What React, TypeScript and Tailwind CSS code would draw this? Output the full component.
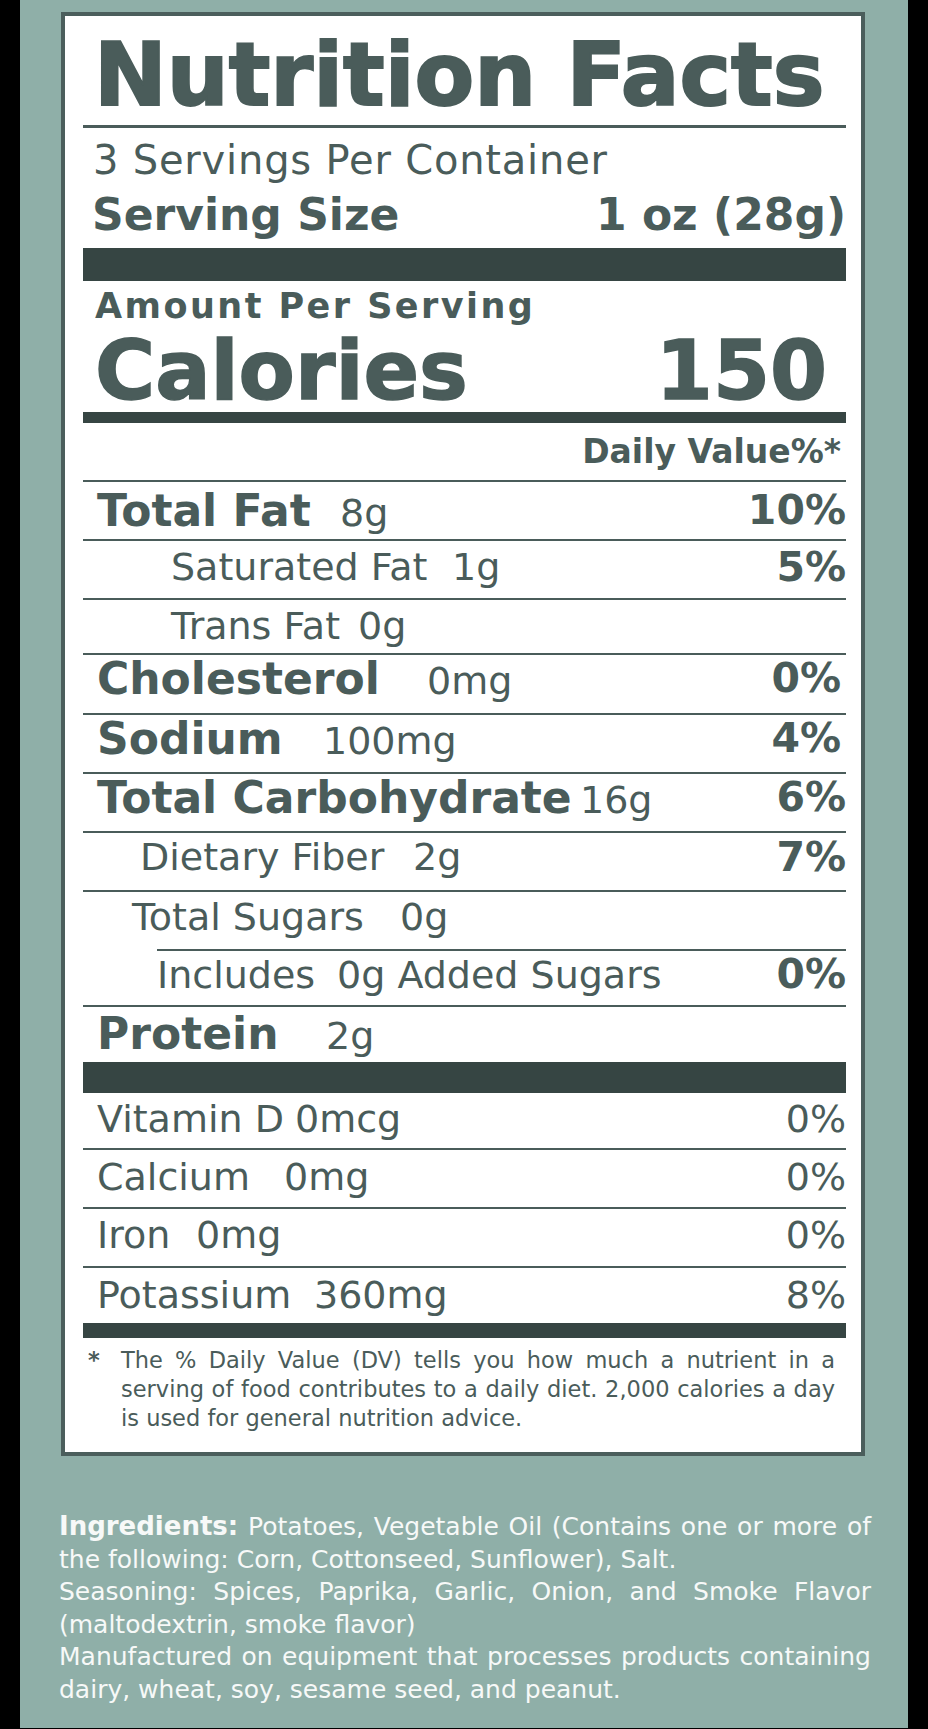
import React from 'react';

type Row = {
  label: string;
  value?: string;
  pct?: string;
  bold?: boolean;
  pctBold?: boolean;
  pad: string;
  lw: string;
  box: string;
  pr?: string;
  rule: 'line' | 'indent' | 'bar' | 'heavy';
};

const rows: Row[] = [
  { label: 'Total Fat', value: '8g', pct: '10%', bold: true, pctBold: true, pad: 'pl-[14px]', lw: 'w-[243px]', box: 'h-[57px] pb-[0px]', rule: 'line' },
  { label: 'Saturated Fat', value: '1g', pct: '5%', pctBold: true, pad: 'pl-[88px]', lw: 'w-[281px]', box: 'h-[57px] pb-[4px]', rule: 'line' },
  { label: 'Trans Fat', value: '0g', pad: 'pl-[88px]', lw: 'w-[187px]', box: 'h-[53px] pb-[0px]', rule: 'line' },
  { label: 'Cholesterol', value: '0mg', pct: '0%', bold: true, pctBold: true, pad: 'pl-[14px]', lw: 'w-[330px]', box: 'h-[58px] pb-[11px]', pr: 'pr-[5px]', rule: 'line' },
  { label: 'Sodium', value: '100mg', pct: '4%', bold: true, pctBold: true, pad: 'pl-[14px]', lw: 'w-[226px]', box: 'h-[57px] pb-[10px]', pr: 'pr-[5px]', rule: 'line' },
  { label: 'Total Carbohydrate', value: '16g', pct: '6%', bold: true, pctBold: true, pad: 'pl-[14px]', lw: 'w-[483px]', box: 'h-[57px] pb-[10px]', rule: 'line' },
  { label: 'Dietary Fiber', value: '2g', pct: '7%', pctBold: true, pad: 'pl-[57px]', lw: 'w-[273px]', box: 'h-[57px] pb-[8px]', rule: 'line' },
  { label: 'Total Sugars', value: '0g', pad: 'pl-[49px]', lw: 'w-[268px]', box: 'h-[57px] pb-[6px]', rule: 'indent' },
  { label: 'Includes', value: '0g Added Sugars', pct: '0%', pctBold: true, pad: 'pl-[74px]', lw: 'w-[180px]', box: 'h-[54px] pb-[6px]', rule: 'line' },
  { label: 'Protein', value: '2g', bold: true, pad: 'pl-[14px]', lw: 'w-[229px]', box: 'h-[55px] pb-[2px]', rule: 'bar' },
  { label: 'Vitamin D', value: '0mcg', pct: '0%', pad: 'pl-[14px]', lw: 'w-[198px]', box: 'h-[55px] pb-[2px]', rule: 'line' },
  { label: 'Calcium', value: '0mg', pct: '0%', pad: 'pl-[14px]', lw: 'w-[187px]', box: 'h-[57px] pb-[2px]', rule: 'line' },
  { label: 'Iron', value: '0mg', pct: '0%', pad: 'pl-[14px]', lw: 'w-[99px]', box: 'h-[57px] pb-[4px]', rule: 'line' },
  { label: 'Potassium', value: '360mg', pct: '8%', pad: 'pl-[14px]', lw: 'w-[217px]', box: 'h-[55px] pb-[0px]', rule: 'heavy' },
];

function Rule({ kind }: { kind: Row['rule'] }) {
  if (kind === 'bar') return <div className="h-[31px] bg-[#364543]" />;
  if (kind === 'heavy') return <div className="h-[15px] bg-[#364543]" />;
  if (kind === 'indent') return <div className="ml-[74px] h-[2px] bg-[#4a5c5a]" />;
  return <div className="h-[2px] bg-[#4a5c5a]" />;
}

function NutrientRow({ row }: { row: Row }) {
  return (
    <>
      <div className={`flex items-center justify-between ${row.box}`}>
        <div className={`flex items-baseline whitespace-nowrap ${row.pad}`}>
          <span className={`${row.lw} shrink-0 ${row.bold ? 'text-[44px] font-bold' : 'text-[38px]'}`}>{row.label}</span>
          {row.value && <span className="text-[38px]">{row.value}</span>}
        </div>
        {row.pct && (
          <span className={`${row.pr ?? ''} ${row.pctBold ? 'text-[41px] font-bold' : 'text-[38px]'}`}>{row.pct}</span>
        )}
      </div>
      <Rule kind={row.rule} />
    </>
  );
}

function Justified({ text }: { text: string }) {
  return <div className="text-justify [text-align-last:justify]">{text}</div>;
}

export default function App() {
  return (
    <div className="min-h-screen bg-black font-['DejaVu_Sans',sans-serif]">
      <div className="mx-auto w-[888px] h-[1728px] bg-[#8fafa8] pt-[12px]">
        <div className="ml-[41px] w-[804px] h-[1444px] border-4 border-[#4b5e5c] bg-white pl-[18px] pr-[15px] text-[#4a5c5a]">
          <div className="h-[109px] pt-[11px] pl-[11px] text-[87px] leading-[96px] font-bold [-webkit-text-stroke:2px_#4a5c5a] whitespace-nowrap">
            Nutrition Facts
          </div>
          <div className="h-[3px] bg-[#4a5c5a]" />
          <div className="flex h-[55px] items-center pt-[8px] pl-[10px] text-[40px] tracking-[0.02em] whitespace-nowrap">
            3 Servings Per Container
          </div>
          <div className="flex h-[65px] items-center justify-between pb-[2px] pl-[9px] text-[44px] font-bold">
            <span>Serving Size</span>
            <span>1 oz (28g)</span>
          </div>
          <div className="h-[33px] bg-[#364543]" />
          <div className="flex h-[40px] items-center pt-[10px] pl-[12px] text-[35px] font-bold tracking-[0.07em] whitespace-nowrap">
            Amount Per Serving
          </div>
          <div className="flex h-[91px] items-center justify-between pt-[8px] pl-[12px] pr-[19px] text-[82px] font-bold [-webkit-text-stroke:1.5px_#4a5c5a]">
            <span>Calories</span>
            <span>150</span>
          </div>
          <div className="h-[11px] bg-[#364543]" />
          <div className="flex h-[57px] items-center justify-end pr-[5px] text-[33px] font-bold">Daily Value%*</div>
          <div className="h-[2px] bg-[#4a5c5a]" />
          {rows.map((r) => (
            <NutrientRow key={r.label} row={r} />
          ))}
          <div className="flex pt-[8px] pl-[5px] pr-[11px] text-[22.5px] leading-[29px]">
            <span className="w-[33px] shrink-0 font-bold">*</span>
            <div className="flex-1">
              <Justified text="The % Daily Value (DV) tells you how much a nutrient in a" />
              <Justified text="serving of food contributes to a daily diet. 2,000 calories a day" />
              <div>is used for general nutrition advice.</div>
            </div>
          </div>
        </div>
        <div className="mt-[54px] ml-[39px] w-[812px] text-[25px] leading-[32.6px] text-[#f7f9f8]">
          <div className="text-justify [text-align-last:justify]">
            <span className="text-[26px] font-bold">Ingredients:</span> Potatoes, Vegetable Oil (Contains one or more of
          </div>
          <div>the following: Corn, Cottonseed, Sunflower), Salt.</div>
          <Justified text="Seasoning: Spices, Paprika, Garlic, Onion, and Smoke Flavor" />
          <div>(maltodextrin, smoke flavor)</div>
          <Justified text="Manufactured on equipment that processes products containing" />
          <div>dairy, wheat, soy, sesame seed, and peanut.</div>
        </div>
      </div>
    </div>
  );
}
